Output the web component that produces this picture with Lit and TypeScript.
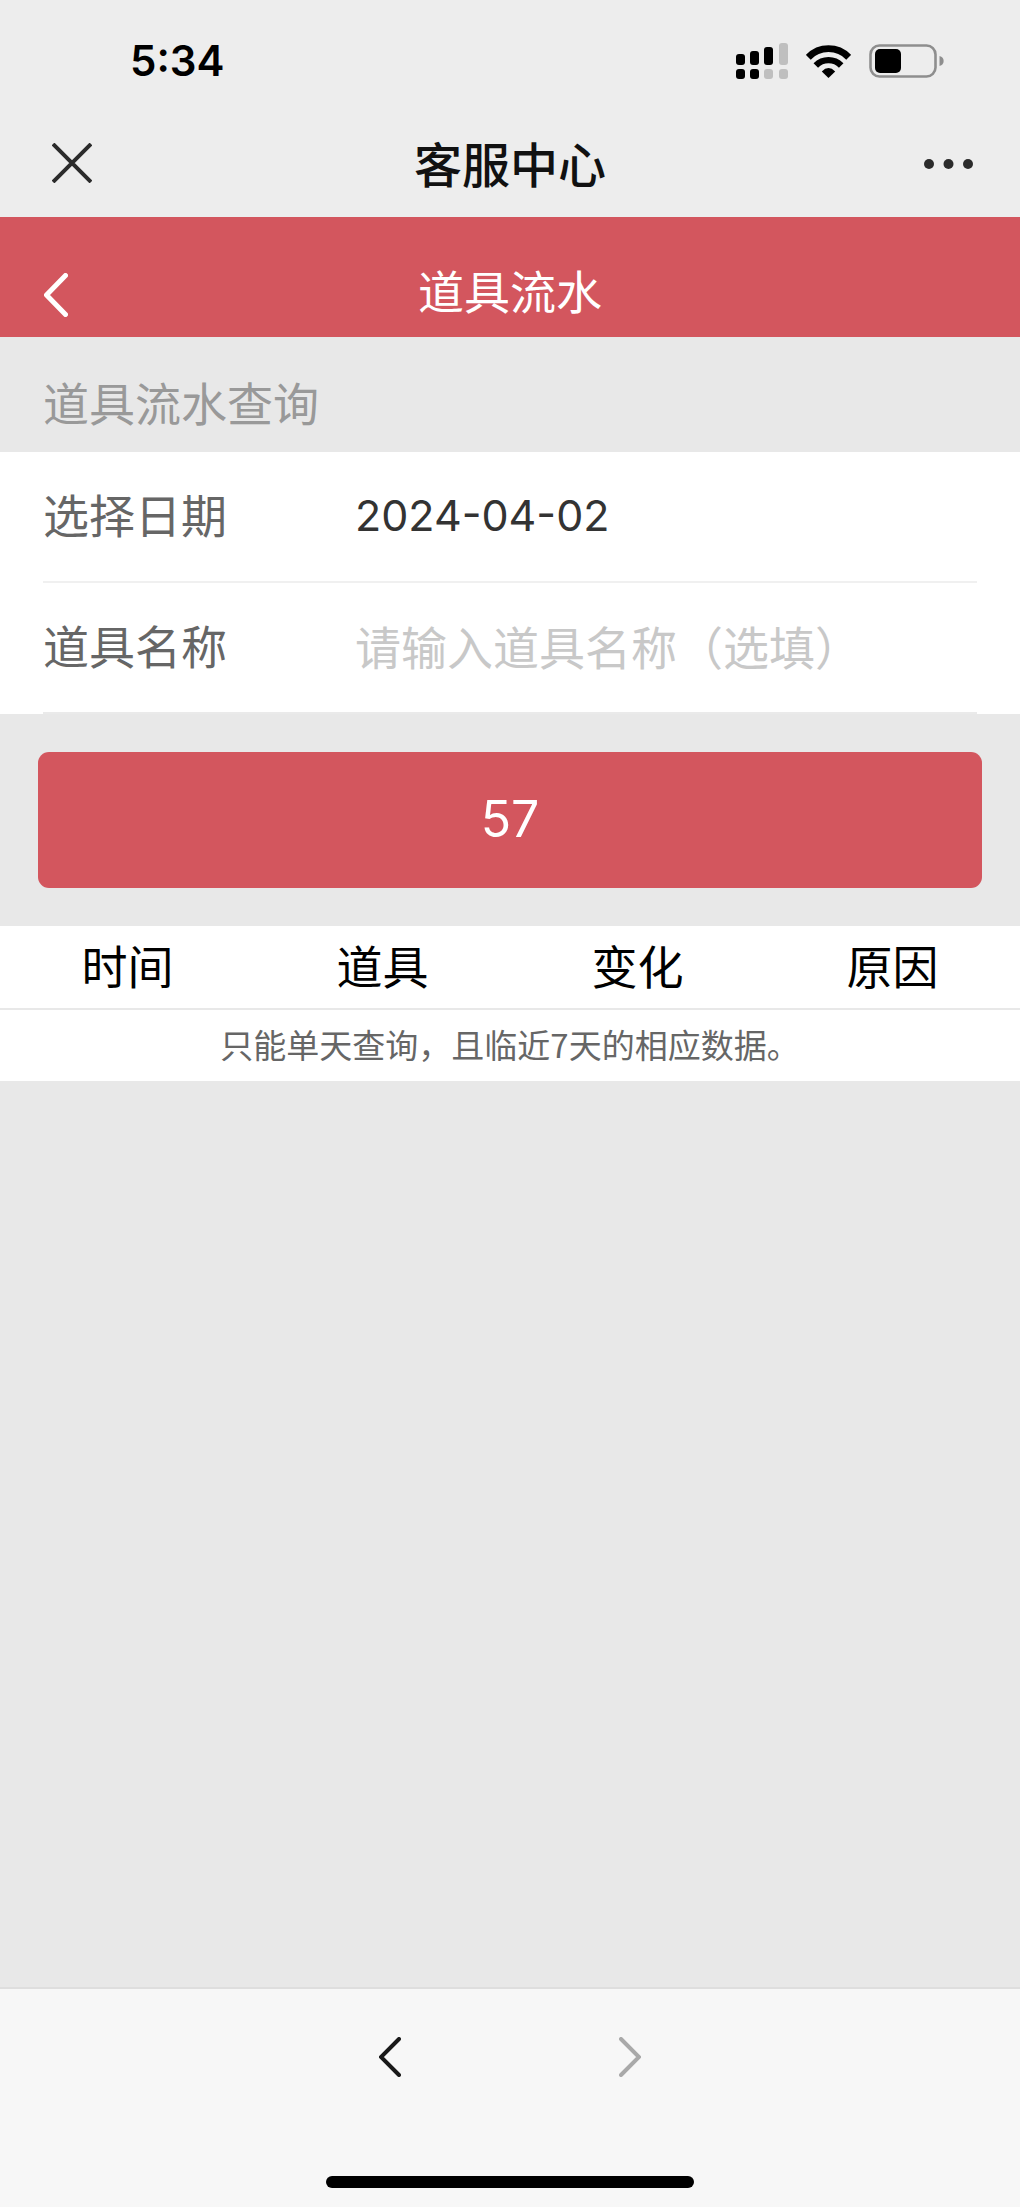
import { LitElement, html, css } from "lit";
import { customElement, property, state } from "lit/decorators.js";

@customElement("status-bar")
class StatusBar extends LitElement {
  @property() time = "";

  static styles = css`
    :host {
      display: flex;
      align-items: center;
      justify-content: space-between;
      height: 96px;
      padding: 13px 76px 0 130px;
    }
    .time {
      font-family: Inter, "Liberation Sans", sans-serif;
      font-size: 42px;
      font-weight: 600;
      line-height: 48px;
      color: #000;
    }
    .icons {
      display: flex;
      align-items: center;
      gap: 18px;
    }
    svg {
      display: block;
    }
  `;

  render() {
    return html`
      <span class="time">${this.time}</span>
      <div class="icons">
        <svg width="53" height="36" viewBox="0 0 53 36" role="img" aria-label="信号">
          <g fill="#000">
            <rect x="1" y="11" width="9" height="11" rx="3" />
            <rect x="15" y="8" width="9" height="14" rx="3" />
            <rect x="29" y="4" width="9" height="18" rx="3" />
            <rect x="1" y="26" width="9" height="10" rx="3" />
            <rect x="15" y="26" width="9" height="10" rx="3" />
          </g>
          <g fill="#bfbfbf">
            <rect x="44" y="0" width="9" height="22" rx="3" />
            <rect x="29" y="26" width="9" height="10" rx="3" />
            <rect x="44" y="26" width="9" height="10" rx="3" />
          </g>
        </svg>
        <svg width="45" height="33" viewBox="0 0 45 33" role="img" aria-label="无线网络">
          <g fill="none" stroke="#000">
            <path d="M2.3 12.3A28 28 0 0 1 42.7 12.3" stroke-width="6.8" />
            <path d="M9.8 20.4A18 18 0 0 1 35.2 20.4" stroke-width="6.4" />
          </g>
          <path d="M22.5 33L15.8 26.5Q22.5 19.6 29.2 26.5Z" fill="#000" />
        </svg>
        <svg width="75" height="34" viewBox="0 0 75 34" role="img" aria-label="电池">
          <rect x="1.5" y="1.5" width="65" height="31" rx="9" fill="none" stroke="#8e8e8e" stroke-width="2.6" />
          <rect x="6" y="5" width="26" height="24" rx="5" fill="#000" />
          <path d="M70.5 12C76 13 76 21 70.5 22Z" fill="#8e8e8e" />
        </svg>
      </div>
    `;
  }
}

@customElement("title-bar")
class TitleBar extends LitElement {
  @property() heading = "";

  static styles = css`
    :host {
      display: grid;
      grid-template-columns: 1fr auto 1fr;
      align-items: center;
      height: 108px;
      padding: 0 46px;
    }
    h1 {
      margin: 0;
      padding-bottom: 2px;
      font-size: 48px;
      font-weight: 500;
      line-height: 64px;
      color: #111;
    }
    button {
      padding: 0;
      border: 0;
      background: none;
    }
    .more {
      justify-self: end;
    }
    .close {
      justify-self: start;
      padding-left: 6px;
    }
    svg {
      display: block;
    }
  `;

  render() {
    return html`
      <button class="close" type="button" aria-label="关闭">
        <svg width="40" height="40" viewBox="0 0 40 40">
          <path d="M1 1L39 39M39 1L1 39" stroke="#2b2b2b" stroke-width="4" />
        </svg>
      </button>
      <h1>${this.heading}</h1>
      <button class="more" type="button" aria-label="更多">
        <svg width="50" height="40" viewBox="0 0 50 40">
          <g fill="#2b2b2b">
            <circle cx="5" cy="21" r="5" />
            <circle cx="24.5" cy="21" r="5" />
            <circle cx="44" cy="21" r="5" />
          </g>
        </svg>
      </button>
    `;
  }
}

@customElement("page-header")
class PageHeader extends LitElement {
  @property() heading = "";

  static styles = css`
    :host {
      display: grid;
      grid-template-columns: 1fr auto 1fr;
      align-items: center;
      height: 92px;
      padding: 28px 44px 0;
      background: #d3565e;
      color: #fff;
    }
    h2 {
      margin: 0;
      padding-bottom: 4px;
      font-size: 46px;
      font-weight: 400;
      line-height: 64px;
    }
    a {
      justify-self: start;
      padding-top: 8px;
    }
    svg {
      display: block;
    }
  `;

  render() {
    return html`
      <a href="#" aria-label="返回">
        <svg width="24" height="44" viewBox="0 0 24 44">
          <path d="M21.5 2.5L2.5 22L21.5 41.5" fill="none" stroke="#fff" stroke-width="5" stroke-linecap="round" stroke-linejoin="round" />
        </svg>
      </a>
      <h2>${this.heading}</h2>
    `;
  }
}

@customElement("query-form")
class QueryForm extends LitElement {
  @state() private date = "2024-04-02";
  @state() private countdown = 57;

  static styles = css`
    :host {
      display: block;
    }
    h3 {
      margin: 0;
      padding: 32px 43px 19px;
      font-size: 46px;
      font-weight: 400;
      line-height: 64px;
      color: #999;
    }
    .fields {
      padding: 0 43px;
      background: #fff;
    }
    .row {
      display: grid;
      grid-template-columns: 312px 1fr;
      align-items: center;
      height: 125px;
      padding-bottom: 4px;
      border-bottom: 2px solid #f0f0f0;
    }
    .row:last-child {
      border-bottom-color: #eaeaea;
    }
    label {
      padding-bottom: 4px;
      font-size: 46px;
      line-height: 64px;
      color: #666;
    }
    input {
      width: 100%;
      box-sizing: border-box;
      padding: 0 0 2px;
      border: 0;
      outline: 0;
      background: none;
      font-family: inherit;
      font-size: 46px;
      line-height: 64px;
      height: 68px;
      color: #333;
    }
    .date {
      padding: 0;
      font-family: Inter, "Liberation Sans", sans-serif;
      font-size: 43px;
    }
    input::placeholder {
      color: #c8c8c8;
      opacity: 1;
    }
    .actions {
      padding: 38px;
    }
    .submit {
      display: block;
      width: 100%;
      height: 136px;
      padding: 0 0 2px;
      border: 0;
      border-radius: 11px;
      background: #d3565e;
      color: #fff;
      font-family: Inter, "Liberation Sans", sans-serif;
      font-size: 50px;
      line-height: 64px;
    }
  `;

  render() {
    return html`
      <form @submit=${(e: Event) => e.preventDefault()}>
        <h3>道具流水查询</h3>
        <div class="fields">
          <div class="row">
            <label for="date">选择日期</label>
            <input id="date" class="date" type="text" readonly .value=${this.date} />
          </div>
          <div class="row">
            <label for="name">道具名称</label>
            <input id="name" type="text" placeholder="请输入道具名称（选填）" />
          </div>
        </div>
        <div class="actions">
          <button class="submit" type="submit">${this.countdown}</button>
        </div>
      </form>
    `;
  }
}

@customElement("record-table")
class RecordTable extends LitElement {
  private columns = ["时间", "道具", "变化", "原因"];

  static styles = css`
    :host {
      display: block;
      background: #fff;
    }
    table {
      width: 100%;
      table-layout: fixed;
      border-collapse: collapse;
    }
    th {
      height: 76px;
      padding: 0 0 6px;
      border-bottom: 2px solid #e8e8e8;
      font-size: 46px;
      font-weight: 400;
      line-height: 64px;
      color: #000;
      text-align: center;
    }
    td {
      height: 67px;
      padding: 0 0 4px;
      font-size: 33px;
      line-height: 48px;
      color: #666;
      text-align: center;
    }
  `;

  render() {
    return html`
      <table>
        <thead>
          <tr>
            ${this.columns.map((c) => html`<th scope="col">${c}</th>`)}
          </tr>
        </thead>
        <tbody>
          <tr>
            <td colspan="4">只能单天查询，且临近7天的相应数据。</td>
          </tr>
        </tbody>
      </table>
    `;
  }
}

@customElement("browser-toolbar")
class BrowserToolbar extends LitElement {
  static styles = css`
    :host {
      display: flex;
      flex-direction: column;
      align-items: center;
      padding-bottom: 19px;
      border-top: 2px solid #dedede;
      background: #f7f7f7;
    }
    nav {
      display: flex;
      justify-content: center;
      gap: 180px;
      padding: 38px 0 89px;
    }
    button {
      display: grid;
      place-items: center;
      width: 60px;
      height: 60px;
      padding: 0;
      border: 0;
      background: none;
      color: #191919;
    }
    button:disabled {
      color: #a9a9a9;
    }
    path {
      fill: none;
      stroke: currentColor;
      stroke-width: 4;
      stroke-linecap: round;
    }
    .home {
      width: 36%;
      height: 12px;
      border-radius: 6px;
      background: #000;
    }
  `;

  render() {
    return html`
      <nav>
        <button type="button" aria-label="后退">
          <svg width="22" height="40" viewBox="0 0 22 40"><path d="M20 2L2 20L20 38" /></svg>
        </button>
        <button type="button" aria-label="前进" disabled>
          <svg width="22" height="40" viewBox="0 0 22 40"><path d="M2 2L20 20L2 38" /></svg>
        </button>
      </nav>
      <div class="home"></div>
    `;
  }
}

@customElement("app-root")
class AppRoot extends LitElement {
  static styles = css`
    :host {
      display: flex;
      flex-direction: column;
      min-height: 100vh;
      background: #e8e8e8;
      font-family: "Noto Sans CJK SC", sans-serif;
    }
    .top {
      background: #ededed;
    }
    main {
      flex: 1;
    }
  `;

  render() {
    return html`
      <header class="top">
        <status-bar time="5:34"></status-bar>
        <title-bar heading="客服中心"></title-bar>
      </header>
      <main>
        <page-header heading="道具流水"></page-header>
        <query-form></query-form>
        <record-table></record-table>
      </main>
      <browser-toolbar></browser-toolbar>
    `;
  }
}
